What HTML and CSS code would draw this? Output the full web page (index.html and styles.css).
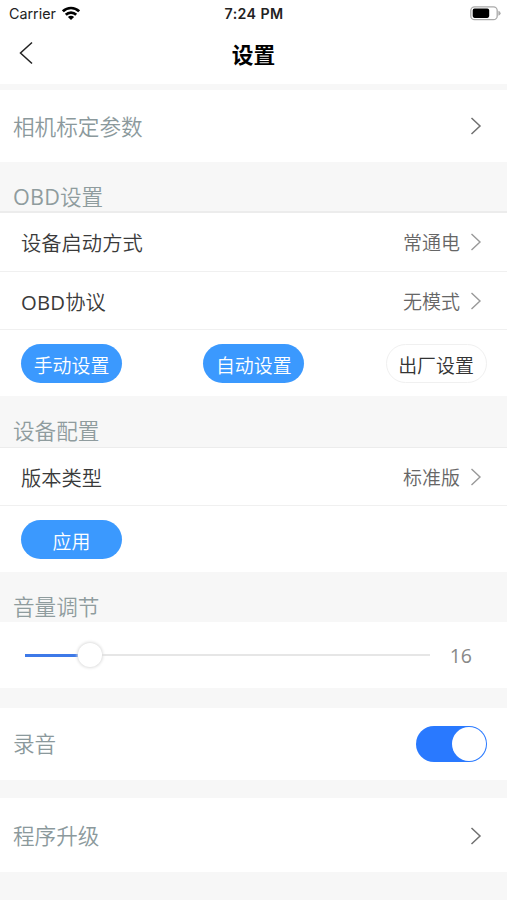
FILE: index.html
```html
<!DOCTYPE html>
<html lang="zh-CN">
<head>
<meta charset="utf-8">
<title>设置</title>
<link rel="stylesheet" href="styles.css">
</head>
<body>
<header class="status">
  <div class="carrier"><span>Carrier</span>
    <svg width="18" height="14" viewBox="0 0 18 14"><g fill="none" stroke="#000" stroke-width="2.7"><path d="M.9 5.3a11.6 11.6 0 0 1 16.2 0"/><path d="M3.8 8.8a7.4 7.4 0 0 1 10.4 0"/></g><path d="M9 14 5.9 11a4.4 4.4 0 0 1 6.2 0Z"/></svg>
  </div>
  <div class="time">7:24 PM</div>
  <svg class="battery" width="31" height="15" viewBox="0 0 31 15"><rect x=".8" y=".8" width="26.4" height="12.9" rx="3.8" fill="#fff" stroke="#aaa" stroke-width="1.3"/><rect x="2.7" y="2.6" width="16.5" height="9.3" rx="1.8"/><path d="M28.4 4.7q2.2.8 2.2 2.5t-2.2 2.5Z" fill="#aaa"/></svg>
</header>
<nav class="nav">
  <svg class="back" width="16" height="24" viewBox="0 0 16 24"><path d="M14 1.5 2.5 12 14 22.5"/></svg>
  <h1>设置</h1>
</nav>
<main>
  <section class="row plain"><span>相机标定参数</span><svg class="chev dark" width="12" height="18" viewBox="0 0 12 18"><path d="m1.5 1 8.5 8-8.5 8"/></svg></section>
  <h2 class="obd"><span class="latin">OBD</span>设置</h2>
  <section class="group">
    <div class="row item"><span>设备启动方式</span><span class="value">常通电<svg class="chev" width="12" height="18" viewBox="0 0 12 18"><path d="m1.5 1 8.5 8-8.5 8"/></svg></span></div>
    <div class="row item protocol"><span><span class="latin">OBD</span>协议</span><span class="value">无模式<svg class="chev" width="12" height="18" viewBox="0 0 12 18"><path d="m1.5 1 8.5 8-8.5 8"/></svg></span></div>
    <div class="actions"><button>手动设置</button><button>自动设置</button><button class="outline">出厂设置</button></div>
  </section>
  <h2 class="config">设备配置</h2>
  <section class="group">
    <div class="row item version"><span>版本类型</span><span class="value">标准版<svg class="chev" width="12" height="18" viewBox="0 0 12 18"><path d="m1.5 1 8.5 8-8.5 8"/></svg></span></div>
    <div class="actions"><button>应用</button></div>
  </section>
  <h2 class="volume">音量调节</h2>
  <section class="slider"><div class="filled"></div><div class="thumb"></div><div class="track"></div><span>16</span></section>
  <section class="row plain record"><span>录音</span><div class="switch"><i></i></div></section>
  <section class="row plain upgrade"><span>程序升级</span><svg class="chev dark" width="12" height="18" viewBox="0 0 12 18"><path d="m1.5 1 8.5 8-8.5 8"/></svg></section>
</main>
</body>
</html>
```
FILE: styles.css
```css
* { box-sizing: border-box; }
body {
  margin: 0;
  min-height: 900px;
  background: #f7f7f7;
  font-family: "Open Sans", "Noto Sans CJK SC", sans-serif;
  font-weight: 350;
  color: #3a3a3a;
}
svg { display: block; flex: none; }
.status {
  height: 28px;
  padding: 0 6px 0 9px;
  display: grid;
  grid-template-columns: 1fr auto 1fr;
  align-items: center;
  background: #fff;
  color: #222;
  font: 400 14.3px/28px Inter, sans-serif;
}
.carrier { display: flex; align-items: center; gap: 6px; }
.carrier svg { margin-top: -3px; }
.time { font-weight: 600; font-size: 14.2px; letter-spacing: .4px; margin-right: 2px; }
.battery { justify-self: end; margin-top: -2px; }
.nav {
  height: 56px;
  padding: 0 18px;
  display: grid;
  grid-template-columns: 1fr auto 1fr;
  align-items: center;
  background: #fff;
}
.back { margin-top: -7px; }
.back path { fill: none; stroke: #222; stroke-width: 1.5; }
h1 { margin: -3px 0 0; font-size: 21.7px; line-height: 32px; font-weight: 700; color: #000; }
main { padding-top: 6px; }
.latin { font-weight: 400; letter-spacing: .2px; }
.row { display: flex; align-items: center; justify-content: space-between; background: #fff; }
.plain { height: 72px; padding: 0 25px 0 13px; font-size: 21.6px; color: #8b999c; }
.plain > span { margin-top: -1px; }
h2 {
  margin: 0;
  height: 50px;
  padding: 19px 13px 0;
  font-size: 21.6px;
  line-height: 32px;
  font-weight: 350;
  color: #8f9c9e;
}
.obd { height: 51px; border-bottom: 2px solid #ececec; }
.config { height: 52px; border-bottom: 1px solid #ececec; }
.volume { height: 50px; }
.group { background: #fff; }
.item { height: 58.5px; padding: 0 25px 0 21px; border-bottom: 1.5px solid #f0f0f0; font-size: 20.3px; }
.protocol { padding-top: 1px; }
.version { height: 58px; }
.value { display: flex; align-items: center; gap: 10px; font-size: 19px; color: #666; }
.chev path { fill: none; stroke: #999; stroke-width: 1.4; }
.chev.dark path { stroke: #707070; stroke-width: 1.5; }
.actions { height: 66px; padding: 0 20.5px 0 21px; display: flex; align-items: center; justify-content: space-between; }
button {
  width: 101px;
  height: 39px;
  padding: 5px 0 0;
  border: 0;
  border-radius: 20px;
  background: #3b99fe;
  color: #fff;
  font: inherit;
  font-size: 18.9px;
  line-height: 28px;
}
.outline { background: #fff; border: 1.5px solid #f0f0f0; color: #333; }
.slider { height: 66px; padding: 0 35px 0 25px; display: flex; align-items: center; background: #fff; }
.filled { width: 53px; height: 3px; background: #3d79e8; }
.thumb { width: 24px; height: 24px; border-radius: 50%; background: #fff; box-shadow: 0 0 3px 1px #ddd; position: relative; }
.track { width: 328px; height: 2px; background: #e6e6e6; }
.slider span { margin: 1px 0 0 auto; color: #888; font-size: 19.5px; font-weight: 400; }
.record { margin-top: 20px; padding-right: 20px; }
.record > span { margin-top: -3px; }
.switch { width: 71px; height: 36px; margin-top: -1px; padding: 1px; border-radius: 18px; background: #2979ff; display: flex; justify-content: flex-end; }
.switch i { width: 34px; height: 34px; border-radius: 50%; background: #fff; }
.upgrade { margin-top: 18px; height: 74px; }
.upgrade svg { margin-top: 1px; }
```
